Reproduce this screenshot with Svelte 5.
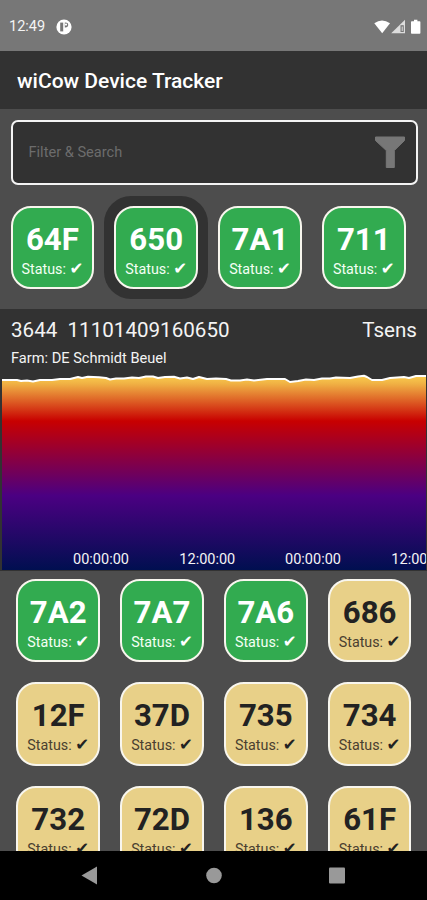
<script lang="ts">
  type Device = { id: string; active: boolean; selected?: boolean };

  const nearby: Device[] = [
    { id: '64F', active: true },
    { id: '650', active: true, selected: true },
    { id: '7A1', active: true },
    { id: '711', active: true },
  ];

  const others: Device[] = [
    { id: '7A2', active: true },
    { id: '7A7', active: true },
    { id: '7A6', active: true },
    { id: '686', active: false },
    { id: '12F', active: false },
    { id: '37D', active: false },
    { id: '735', active: false },
    { id: '734', active: false },
    { id: '732', active: false },
    { id: '72D', active: false },
    { id: '136', active: false },
    { id: '61F', active: false },
  ];

  const ticks = [
    { x: 99, label: '00:00:00' },
    { x: 205.3, label: '12:00:00' },
    { x: 311, label: '00:00:00' },
    { x: 417.3, label: '12:00:00' },
  ];

  // sensor samples, x / y in chart pixels
  const samples = [
    [0, 6], [15, 6], [19, 7], [25, 6.5], [31, 7.5], [38, 6], [50, 6], [58, 5], [68, 5], [76, 3],
    [80, 4], [86, 2.8], [97, 3.3], [104, 4], [108, 5.5], [114, 4.5], [122, 4.5], [130, 3.5],
    [137, 4], [144, 2.5], [151, 2.5], [156, 4], [163, 3], [172, 2.8], [178, 4.5], [185, 3.5],
    [191, 5], [197, 3], [205, 5], [214, 4.5], [224, 5], [229, 6.5], [238, 6.5], [245, 5.5],
    [252, 6.5], [265, 5], [283, 5], [288, 8], [296, 7], [304, 5.5], [312, 6], [320, 4.5],
    [328, 4.5], [334, 3.5], [348, 4], [356, 2.5], [362, 1.8], [365, 3], [370, 6], [380, 6],
    [388, 4], [402, 3], [407, 4], [414, 2], [424, 2],
  ];

  const line = samples.map(([x, y]) => `${x},${y}`).join(' ');
  const area = `0,196 ${line} 424,196`;

  let query = $state('');
</script>

{#snippet tile(device: Device)}
  <button class="cell" class:selected={device.selected}>
    <span class="tile" class:active={device.active}>
      <span class="id">{device.id}</span>
      <span class="status">Status: <span class="check">✔</span></span>
    </span>
  </button>
{/snippet}

<div class="screen">
  <div class="statusbar">
    <span class="clock">12:49</span>
    <svg class="notif" width="16" height="16" viewBox="0 0 16 16">
      <circle cx="8" cy="8" r="7.6" fill="#fff" />
      <path d="M4.2 3.6H7.2V12.4H4.2z" fill="#777" />
      <path d="M8.8 3.6Q12.2 3.4 12.2 6T8.8 8.4z" fill="#777" />
      <circle cx="10" cy="5.6" r="1.1" fill="#fff" />
    </svg>
    <svg class="signals" width="48" height="16" viewBox="0 0 48 16">
      <path d="M.3 4.2Q8 -1.2 16 4.2L8.2 14.3z" fill="#fff" />
      <path d="M17.2 14.2L31 .8V14.2z" fill="#ddd" />
      <path d="M26.5 6.2H29.8V13H26.5z" fill="#777" />
      <path d="M27.7 7.4h1V12h-1z" fill="#ddd" />
      <path d="M37.8 2.2h2.2V.8h3.4v1.4h2.2q.8 0 .8.8V14q0 .8-.8.8h-7.8q-.8 0-.8-.8V3q0-.8.8-.8z" fill="#fff" />
    </svg>
  </div>

  <header>wiCow Device Tracker</header>

  <main>
    <div class="search">
      <input type="text" placeholder="Filter &amp; Search" bind:value={query} />
      <svg width="32" height="33" viewBox="0 0 32 33">
        <path d="M1.5 1H30.5V4.5L20.3 14.5V31.5H12.3V14.5L1.5 4.5z" fill="#777" stroke="#777" stroke-linejoin="round" />
      </svg>
    </div>

    <div class="grid nearby">
      {#each nearby as device}
        {@render tile(device)}
      {/each}
    </div>

    <section class="detail">
      <div class="row">
        <span>3644&nbsp; 11101409160650</span>
        <span>Tsens</span>
      </div>
      <div class="farm">Farm: DE Schmidt Beuel</div>
      <svg class="chart" width="424" height="196" viewBox="0 0 424 196">
        <defs>
          <linearGradient id="heat" gradientUnits="userSpaceOnUse" x1="0" y1="0" x2="0" y2="196">
            <stop offset="0" stop-color="#fcd250" />
            <stop offset="0.05" stop-color="#f0b144" />
            <stop offset="0.24" stop-color="#c80000" />
            <stop offset="0.62" stop-color="#4b0082" />
            <stop offset="1" stop-color="#000f50" />
          </linearGradient>
        </defs>
        <polygon points={area} fill="url(#heat)" />
        <polyline points={line} fill="none" stroke="#fff" stroke-width="2" stroke-linejoin="round" />
        {#each ticks as tick}
          <text x={tick.x} y="189.5" text-anchor="middle">{tick.label}</text>
        {/each}
      </svg>
    </section>

    <div class="grid others">
      {#each others as device}
        {@render tile(device)}
      {/each}
    </div>
  </main>

  <nav>
    <svg width="427" height="49" viewBox="0 0 427 49">
      <path d="M81.5 24.5L97 15.5V33.5z" fill="#999" />
      <circle cx="214" cy="24.5" r="7.8" fill="#999" />
      <rect x="329" y="16.5" width="16" height="16" rx="1" fill="#999" />
    </svg>
  </nav>
</div>

<style>
  :global(body) {
    background: #4d4d4d;
  }

  .screen {
    width: 427px;
    height: 900px;
    display: flex;
    flex-direction: column;
    overflow: hidden;
    background: #4d4d4d;
    color: #f4f4f4;
    font-family: Roboto, sans-serif;
  }

  .statusbar {
    height: 51px;
    flex: none;
    display: flex;
    align-items: center;
    box-sizing: border-box;
    padding: 2px 5.5px 0 9px;
    background: #777;
  }

  .clock {
    font-size: 14.5px;
  }

  .notif {
    margin-left: 11px;
  }

  .signals {
    margin-left: auto;
  }

  header {
    height: 58px;
    flex: none;
    padding: 1px 17px 0;
    box-sizing: border-box;
    line-height: 59px;
    font-size: 21px;
    font-weight: 500;
    background: #323232;
    color: #fff;
  }

  main {
    flex: 1;
    min-height: 0;
    overflow: hidden;
  }

  .search {
    display: flex;
    align-items: center;
    justify-content: space-between;
    box-sizing: border-box;
    height: 65.5px;
    margin: 10.5px 9.5px 10.5px 10.5px;
    padding: 0 9.5px 0 16px;
    border: 2px solid #f4f4f4;
    border-radius: 7px;
    background: #323232;
  }

  .search input {
    flex: 1;
    min-width: 0;
    padding: 0;
    border: 0;
    outline: 0;
    background: none;
    color: #fff;
    font: 14.6px Roboto, sans-serif;
  }

  .search input::placeholder {
    color: #6c6c6c;
    opacity: 1;
  }

  .grid {
    display: grid;
    grid-template-columns: repeat(4, 103.8px);
    grid-auto-rows: 103.8px;
  }

  .nearby {
    padding: 0 0 10px 0.5px;
  }

  .others {
    padding-left: 6.3px;
    margin-top: -2.2px;
  }

  .cell {
    padding: 10px;
    border: 0;
    border-radius: 27px;
    background: none;
    font-family: inherit;
  }

  .cell.selected {
    background: #323232;
  }

  .tile {
    display: flex;
    flex-direction: column;
    align-items: center;
    box-sizing: border-box;
    width: 83.8px;
    height: 83.8px;
    padding-top: 15px;
    border: 2px solid #f8f6ee;
    border-radius: 20px;
    background: #e8d088;
    color: #222;
  }

  .tile.active {
    background: #32ab50;
    color: #fff;
  }

  .id {
    font-size: 31.2px;
    font-weight: 700;
    line-height: 34px;
  }

  .status {
    font-size: 14.3px;
    line-height: 18px;
    margin-top: 3px;
    white-space: nowrap;
    color: #4a4030;
  }

  .tile.active .status {
    color: #f4fff4;
  }

  .check {
    font-family: "DejaVu Sans", sans-serif;
    font-size: 16.5px;
    line-height: 1;
    color: #222;
  }

  .tile.active .check {
    color: #fff;
  }

  .detail {
    height: 261.5px;
    background: #323232;
  }

  .row {
    display: flex;
    justify-content: space-between;
    padding: 9px 10px 0 11px;
    font-size: 20.6px;
    line-height: 24px;
  }

  .farm {
    padding: 7px 11px 0;
    font-size: 14.6px;
    line-height: 18px;
    height: 27px;
    box-sizing: border-box;
    margin-bottom: 5px;
  }

  .chart {
    display: block;
    margin-left: 2px;
  }

  .chart text {
    font-size: 14.5px;
    fill: #f4f4f4;
  }

  nav {
    flex: none;
    height: 49px;
    background: #000;
  }
</style>
